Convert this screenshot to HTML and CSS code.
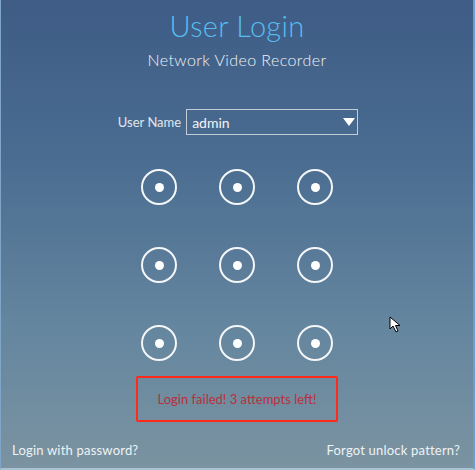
FILE: index.html
```html
<!DOCTYPE html>
<html lang="en">
<head>
<meta charset="utf-8">
<title>User Login</title>
<link rel="stylesheet" href="styles.css">
</head>
<body>
<div class="screen">
  <h1 class="title">User Login</h1>
  <p class="subtitle">Network Video Recorder</p>
  <div class="user-row">
    <span class="user-label">User Name</span>
    <div class="select">
      <span class="select-value">admin</span>
      <span class="select-arrow"></span>
    </div>
  </div>
  <div class="pattern">
    <div class="node"></div><div class="node"></div><div class="node"></div>
    <div class="node"></div><div class="node"></div><div class="node"></div>
    <div class="node"></div><div class="node"></div><div class="node"></div>
  </div>
  <div class="error">Login failed! 3 attempts left!</div>
  <div class="footer">
    <span class="link">Login with password?</span>
    <span class="link">Forgot unlock pattern?</span>
  </div>
  <svg class="cursor" width="14" height="18" viewBox="0 0 14 18">
    <path d="M1 1 L1 13 L4 10 L7 16 L9 15 L6.5 9.5 L11 9.5 Z" fill="#ffffff" stroke="#000000" stroke-width="1" stroke-linejoin="miter"/>
  </svg>
</div>
</body>
</html>
```
FILE: styles.css
```css
html, body {
  margin: 0;
  padding: 0;
}
body {
  width: 475px;
  height: 470px;
  overflow: hidden;
  font-family: "Lato", "Open Sans", sans-serif;
}
.screen {
  position: relative;
  box-sizing: border-box;
  width: 475px;
  height: 470px;
  border-left: 1px solid #7fa6c8;
  border-right: 2px solid #6c9dd0;
  border-bottom: 2px solid #a8c2d4;
  background: linear-gradient(to bottom, #3e5c86 0%, #4b6d91 35%, #64869f 70%, #7b93a1 100%);
  display: flex;
  flex-direction: column;
  align-items: center;
}
.title {
  margin: 8px 0 0 0;
  font-size: 29px;
  line-height: 36px;
  font-weight: 300;
  color: #56bdf0;
  letter-spacing: 0.3px;
}
.subtitle {
  margin: 6px 0 0 0;
  font-size: 16px;
  line-height: 20px;
  font-weight: 300;
  color: #eef2f6;
  letter-spacing: 0.4px;
}
.user-row {
  display: flex;
  align-items: center;
  gap: 5px;
  margin-top: 39px;
  margin-left: 2px;
}
.user-label {
  font-size: 13px;
  color: #e0e6ec;
}
.select {
  box-sizing: border-box;
  width: 172px;
  height: 26px;
  border: 1px solid #c4ccd6;
  display: flex;
  align-items: center;
  justify-content: space-between;
  padding: 0 1px 0 5px;
}
.select-value {
  font-size: 14px;
  color: #f2f4f6;
}
.select-arrow {
  width: 0;
  height: 0;
  border-left: 6px solid transparent;
  border-right: 6px solid transparent;
  border-top: 8px solid #ffffff;
  margin-right: 1px;
}
.pattern {
  display: grid;
  grid-template-columns: repeat(3, 36px);
  grid-template-rows: repeat(3, 36px);
  column-gap: 42px;
  row-gap: 42px;
  margin-top: 34px;
}
.node {
  box-sizing: border-box;
  width: 36px;
  height: 36px;
  border: 2px solid #f4f6f8;
  border-radius: 50%;
  display: flex;
  align-items: center;
  justify-content: center;
}
.node::after {
  content: "";
  width: 9px;
  height: 9px;
  border-radius: 50%;
  background: #ffffff;
}
.error {
  box-sizing: border-box;
  width: 202px;
  height: 46px;
  margin-top: 15px;
  border: 2px solid #ff2a1a;
  border-radius: 2px;
  display: flex;
  align-items: center;
  justify-content: center;
  font-size: 13px;
  color: #b8303c;
}
.footer {
  align-self: stretch;
  display: flex;
  justify-content: space-between;
  padding: 0 13px 0 11px;
  margin-top: 20px;
}
.link {
  font-size: 13px;
  color: #eef2f5;
  letter-spacing: 0.2px;
}
.cursor {
  position: absolute;
  left: 388px;
  top: 316px;
}
```
